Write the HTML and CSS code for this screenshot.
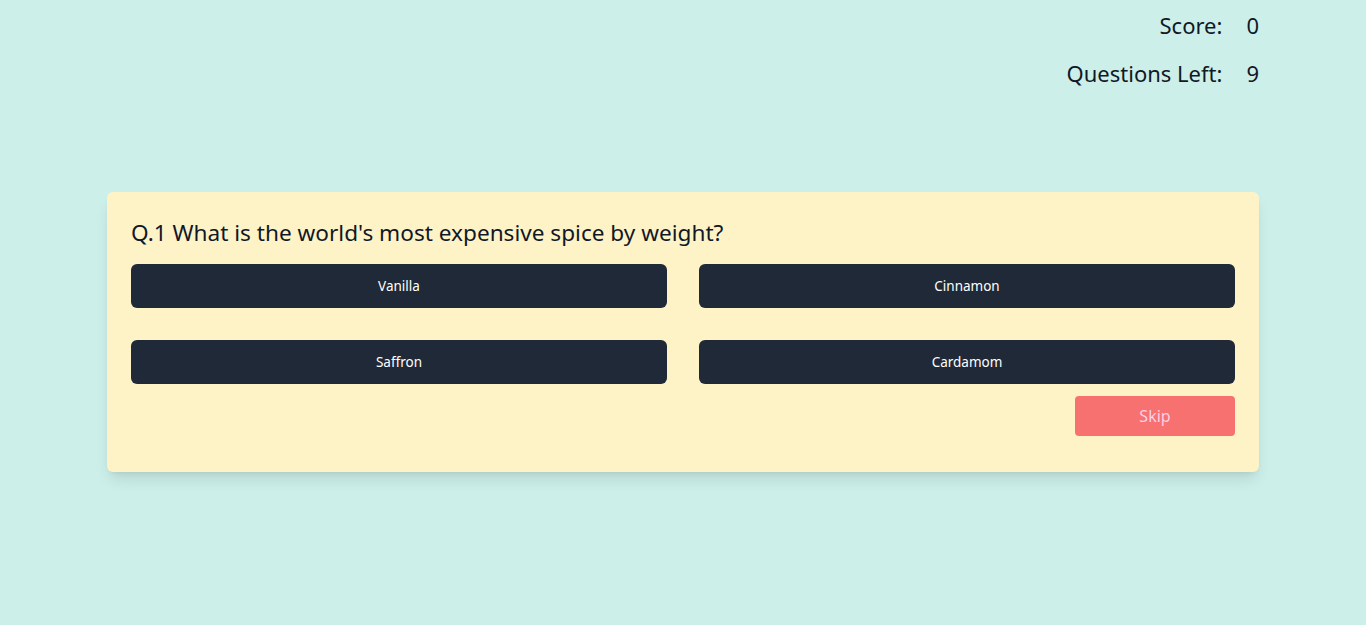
FILE: index.html
```html
<!DOCTYPE html>
<html lang="en">
<head>
<meta charset="utf-8">
<title>Quiz</title>
<link rel="stylesheet" href="styles.css">
</head>
<body>
<main class="page">
  <section class="stats">
    <span class="stat-label">Score:</span><span class="stat-value">0</span>
    <span class="stat-label">Questions Left:</span><span class="stat-value">9</span>
  </section>
  <section class="card">
    <h2 class="question">Q.1 What is the world's most expensive spice by weight?</h2>
    <div class="options">
      <button class="option">Vanilla</button>
      <button class="option">Cinnamon</button>
      <button class="option">Saffron</button>
      <button class="option">Cardamom</button>
    </div>
    <div class="actions">
      <button class="skip">Skip</button>
    </div>
  </section>
</main>
</body>
</html>
```
FILE: styles.css
```css
* { box-sizing: border-box; }
html, body { margin: 0; padding: 0; }
body {
  background: #ccefe9;
  font-family: "Noto Sans", "Open Sans", sans-serif;
  color: #111827;
  height: 625px;
}
.page {
  max-width: 1152px;
  margin: 0 auto;
  padding-top: 9px;
}
.stats {
  display: grid;
  grid-template-columns: auto auto;
  justify-content: end;
  column-gap: 24px;
  row-gap: 15px;
  font-size: 22px;
  line-height: 33px;
}
.stat-label { text-align: right; }
.stat-value { text-align: left; }
.card {
  margin-top: 102px;
  background: #fef3c7;
  border-radius: 6px;
  box-shadow: 0 10px 15px -3px rgba(0,0,0,0.1), 0 4px 6px -4px rgba(0,0,0,0.1);
  padding: 24px 24px 36px;
}
.question {
  margin: 0 0 14px;
  font-size: 22.6px;
  font-weight: 400;
  line-height: 34px;
}
.options {
  display: grid;
  grid-template-columns: 1fr 1fr;
  column-gap: 32px;
  row-gap: 32px;
}
.option {
  height: 44px;
  border: 0;
  border-radius: 6px;
  background: #1f2937;
  color: #ffffff;
  font-family: inherit;
  font-size: 13.5px;
  cursor: pointer;
}
.actions {
  display: flex;
  justify-content: flex-end;
  margin-top: 12px;
}
.skip {
  width: 160px;
  height: 40px;
  border: 0;
  border-radius: 4px;
  background: #f87171;
  color: #fbcfe8;
  font-family: inherit;
  font-size: 16px;
  cursor: pointer;
}
```
